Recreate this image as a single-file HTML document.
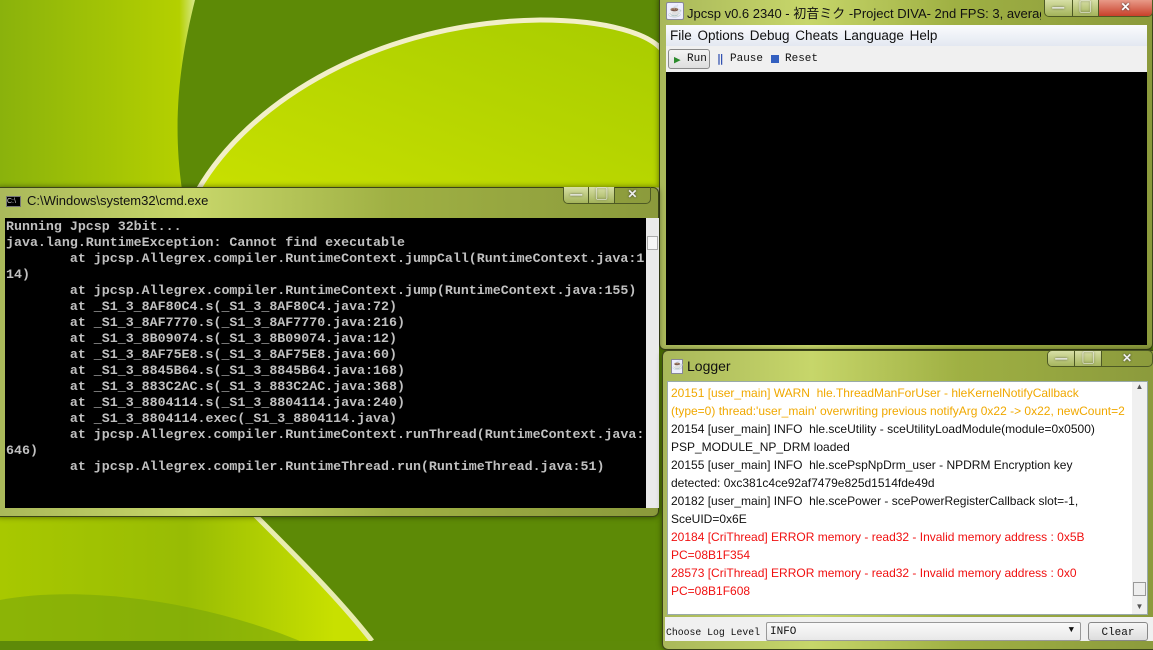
<!DOCTYPE html>
<html><head><meta charset="utf-8"><style>
*{margin:0;padding:0;box-sizing:border-box}
body{width:1153px;height:641px;overflow:hidden;position:relative;background:#5e8a08;font-family:"Liberation Sans","Noto Sans CJK JP",sans-serif}
.abs{position:absolute}
.mono{font-family:"Liberation Mono","DejaVu Sans Mono",monospace}
.frame{background:linear-gradient(90deg,#a9b85a,#c7d66a 30%,#9fb043 60%,#8b9a3c);border:1px solid #3b4418;border-radius:6px;box-shadow:0 0 6px rgba(0,0,0,.5)}
.btns{position:absolute;top:0;height:17px;border:1px solid #4e5a24;border-top:none;border-radius:0 0 5px 5px;display:flex;overflow:hidden}
.btns div{height:16px;border-right:1px solid #4e5a24;background:linear-gradient(#d7dfa6,#a3b35a);color:#fff;font-weight:bold;text-align:center;font-size:12px;line-height:15px;text-shadow:0 0 2px #333}
.btns div:last-child{border-right:none}
.log div{height:18px;line-height:18px;white-space:nowrap}
</style></head><body>
<svg class="abs" style="left:0;top:0" width="1153" height="641">
<defs>
<linearGradient id="g1" x1="0" y1="0" x2="1" y2="0"><stop offset="0" stop-color="#8ab20c"/><stop offset=".92" stop-color="#b4d000"/><stop offset="1" stop-color="#d8e88a"/></linearGradient>
<linearGradient id="g2" x1="0" y1="1" x2="1" y2="0"><stop offset="0" stop-color="#c8e000"/><stop offset=".6" stop-color="#b4d400"/><stop offset="1" stop-color="#a8cc00"/></linearGradient>
<linearGradient id="g3" x1="0" y1="0" x2="1" y2="0"><stop offset="0" stop-color="#a8c800"/><stop offset=".5" stop-color="#98bc04"/><stop offset=".9" stop-color="#c8e000"/></linearGradient>
</defs>
<rect width="1153" height="641" fill="#5d8a06"/>
<path d="M0 0 H195 C180 60 172 120 182 190 L0 190 Z" fill="url(#g1)"/>
<path d="M198 190 C250 100 380 22 540 20 C610 20 650 35 662 50 L662 190 Z" fill="url(#g2)" stroke="#f2efc8" stroke-width="5"/>
<path d="M0 515 H255 C300 560 340 600 372 641 H0 Z" fill="url(#g3)"/>
<path d="M255 515 C300 560 340 600 372 641" fill="none" stroke="#e8ecb0" stroke-width="5"/>
<path d="M0 600 C80 585 200 600 300 641 H0Z" fill="#7aa60a" opacity=".6"/>
</svg>

<!-- Jpcsp window -->
<div class="abs frame" style="left:659px;top:-6px;width:494px;height:356px"></div>
<div class="abs" style="left:666px;top:2px;width:18px;height:18px;background:#eef;border:1px solid #889;border-radius:2px;color:#d40;font-size:12px;text-align:center;line-height:16px">☕</div>
<div class="abs" style="left:687px;top:3px;font-size:13px;color:#111;white-space:nowrap;width:354px;overflow:hidden">Jpcsp v0.6 2340 - 初音ミク -Project DIVA- 2nd FPS: 3, averag...</div>
<div class="btns" style="left:1044px;width:109px"><div style="width:28px">—</div><div style="width:27px">▢</div><div style="width:54px;background:linear-gradient(#e89a88,#c8402a)">✕</div></div>
<div class="abs" style="left:666px;top:25px;width:481px;height:21px;background:linear-gradient(#fafbfd,#e3e8f1);font-size:13.5px;color:#111;line-height:21px;padding-left:4px;word-spacing:2px">File Options Debug Cheats Language Help</div>
<div class="abs mono" style="left:666px;top:46px;width:481px;height:26px;background:#f0f0f0;font-size:11px;color:#111">
 <div class="abs" style="left:2px;top:3px;width:42px;height:20px;border:1px solid #8a8a8a;border-radius:3px;background:linear-gradient(#f4f4f4,#dedede)"></div>
 <span class="abs" style="left:8px;top:7px;color:#2a8a2a">▶</span><span class="abs" style="left:21px;top:7px">Run</span>
 <span class="abs" style="left:51px;top:6px;color:#3050b0;font-weight:bold">‖</span><span class="abs" style="left:64px;top:7px">Pause</span>
 <span class="abs" style="left:105px;top:9px;width:8px;height:8px;background:#3460c0"></span><span class="abs" style="left:119px;top:7px">Reset</span>
</div>
<div class="abs" style="left:666px;top:72px;width:481px;height:273px;background:#000"></div>

<!-- cmd window -->
<div class="abs frame" style="left:-6px;top:187px;width:665px;height:330px"></div>
<div class="abs" style="left:6px;top:196px;width:15px;height:11px;background:#000;border:1px solid #777;color:#ccc;font-size:7px;line-height:9px">C:\</div>
<div class="abs" style="left:27px;top:193px;font-size:13px;color:#111">C:\Windows\system32\cmd.exe</div>
<div class="btns" style="left:563px;width:88px;top:187px"><div style="width:26px">—</div><div style="width:26px">▢</div><div style="width:36px;background:none;color:#eee">✕</div></div>
<div class="abs" style="left:5px;top:218px;width:641px;height:290px;background:#000"></div>
<div class="abs" style="left:646px;top:218px;width:13px;height:290px;background:#eaeaea"><div style="margin:18px 1px;height:14px;border:1px solid #aaa;background:#f6f6f6"></div></div>
<pre class="abs mono" style="left:6px;top:219px;font-size:13.3px;line-height:16px;color:#c0c0c0;font-weight:bold">Running Jpcsp 32bit...
java.lang.RuntimeException: Cannot find executable
        at jpcsp.Allegrex.compiler.RuntimeContext.jumpCall(RuntimeContext.java:1
14)
        at jpcsp.Allegrex.compiler.RuntimeContext.jump(RuntimeContext.java:155)
        at _S1_3_8AF80C4.s(_S1_3_8AF80C4.java:72)
        at _S1_3_8AF7770.s(_S1_3_8AF7770.java:216)
        at _S1_3_8B09074.s(_S1_3_8B09074.java:12)
        at _S1_3_8AF75E8.s(_S1_3_8AF75E8.java:60)
        at _S1_3_8845B64.s(_S1_3_8845B64.java:168)
        at _S1_3_883C2AC.s(_S1_3_883C2AC.java:368)
        at _S1_3_8804114.s(_S1_3_8804114.java:240)
        at _S1_3_8804114.exec(_S1_3_8804114.java)
        at jpcsp.Allegrex.compiler.RuntimeContext.runThread(RuntimeContext.java:
646)
        at jpcsp.Allegrex.compiler.RuntimeThread.run(RuntimeThread.java:51)</pre>

<!-- Logger -->
<div class="abs frame" style="left:662px;top:350px;width:497px;height:300px"></div>
<div class="abs" style="left:671px;top:359px;width:12px;height:15px;background:#eef;border:1px solid #889;font-size:9px;color:#d40">☕</div>
<div class="abs" style="left:687px;top:358px;font-size:14px;color:#111">Logger</div>
<div class="btns" style="left:1047px;width:106px;top:350px;border-top:1px solid #4e5a24;border-radius:5px"><div style="width:28px">—</div><div style="width:27px">▢</div><div style="width:51px;background:none;color:#eee">✕</div></div>
<div class="abs" style="left:667px;top:381px;width:481px;height:234px;background:#fff;border:1px solid #9aa"></div>
<div class="abs" style="left:1132px;top:382px;width:15px;height:232px;background:#f0f0f0;font-size:8px;color:#555;text-align:center">▲<div style="position:absolute;top:200px;left:1px;width:13px;height:14px;border:1px solid #999;background:#eee"></div><div style="position:absolute;top:220px;width:15px">▼</div></div>
<div class="abs log" style="left:671px;top:384px;font-size:12px;color:#111;width:460px;overflow:hidden">
<div style="color:#f0a800">20151 [user_main] WARN&nbsp; hle.ThreadManForUser - hleKernelNotifyCallback</div>
<div style="color:#f0a800">(type=0) thread:'user_main' overwriting previous notifyArg 0x22 -&gt; 0x22, newCount=2</div>
<div>20154 [user_main] INFO&nbsp; hle.sceUtility - sceUtilityLoadModule(module=0x0500)</div>
<div>PSP_MODULE_NP_DRM loaded</div>
<div>20155 [user_main] INFO&nbsp; hle.scePspNpDrm_user - NPDRM Encryption key</div>
<div>detected: 0xc381c4ce92af7479e825d1514fde49d</div>
<div>20182 [user_main] INFO&nbsp; hle.scePower - scePowerRegisterCallback slot=-1,</div>
<div>SceUID=0x6E</div>
<div style="color:#f01010">20184 [CriThread] ERROR memory - read32 - Invalid memory address : 0x5B</div>
<div style="color:#f01010">PC=08B1F354</div>
<div style="color:#f01010">28573 [CriThread] ERROR memory - read32 - Invalid memory address : 0x0</div>
<div style="color:#f01010">PC=08B1F608</div>
</div>
<div class="abs" style="left:665px;top:617px;width:488px;height:24px;background:#f0f0f0"></div>
<div class="abs mono" style="left:666px;top:627px;font-size:9.8px;color:#111;white-space:nowrap">Choose Log Level</div>
<div class="abs mono" style="left:766px;top:622px;width:315px;height:19px;border:1px solid #999;border-radius:2px;background:linear-gradient(#fafafa,#e8e8e8);font-size:11px;padding:3px 3px;color:#111">INFO<span style="position:absolute;right:6px;top:2px;font-size:9px">▼</span></div>
<div class="abs mono" style="left:1088px;top:622px;width:60px;height:19px;border:1px solid #888;border-radius:3px;background:linear-gradient(#f6f6f6,#ddd);font-size:11px;text-align:center;line-height:20px;color:#111">Clear</div>
</body></html>
